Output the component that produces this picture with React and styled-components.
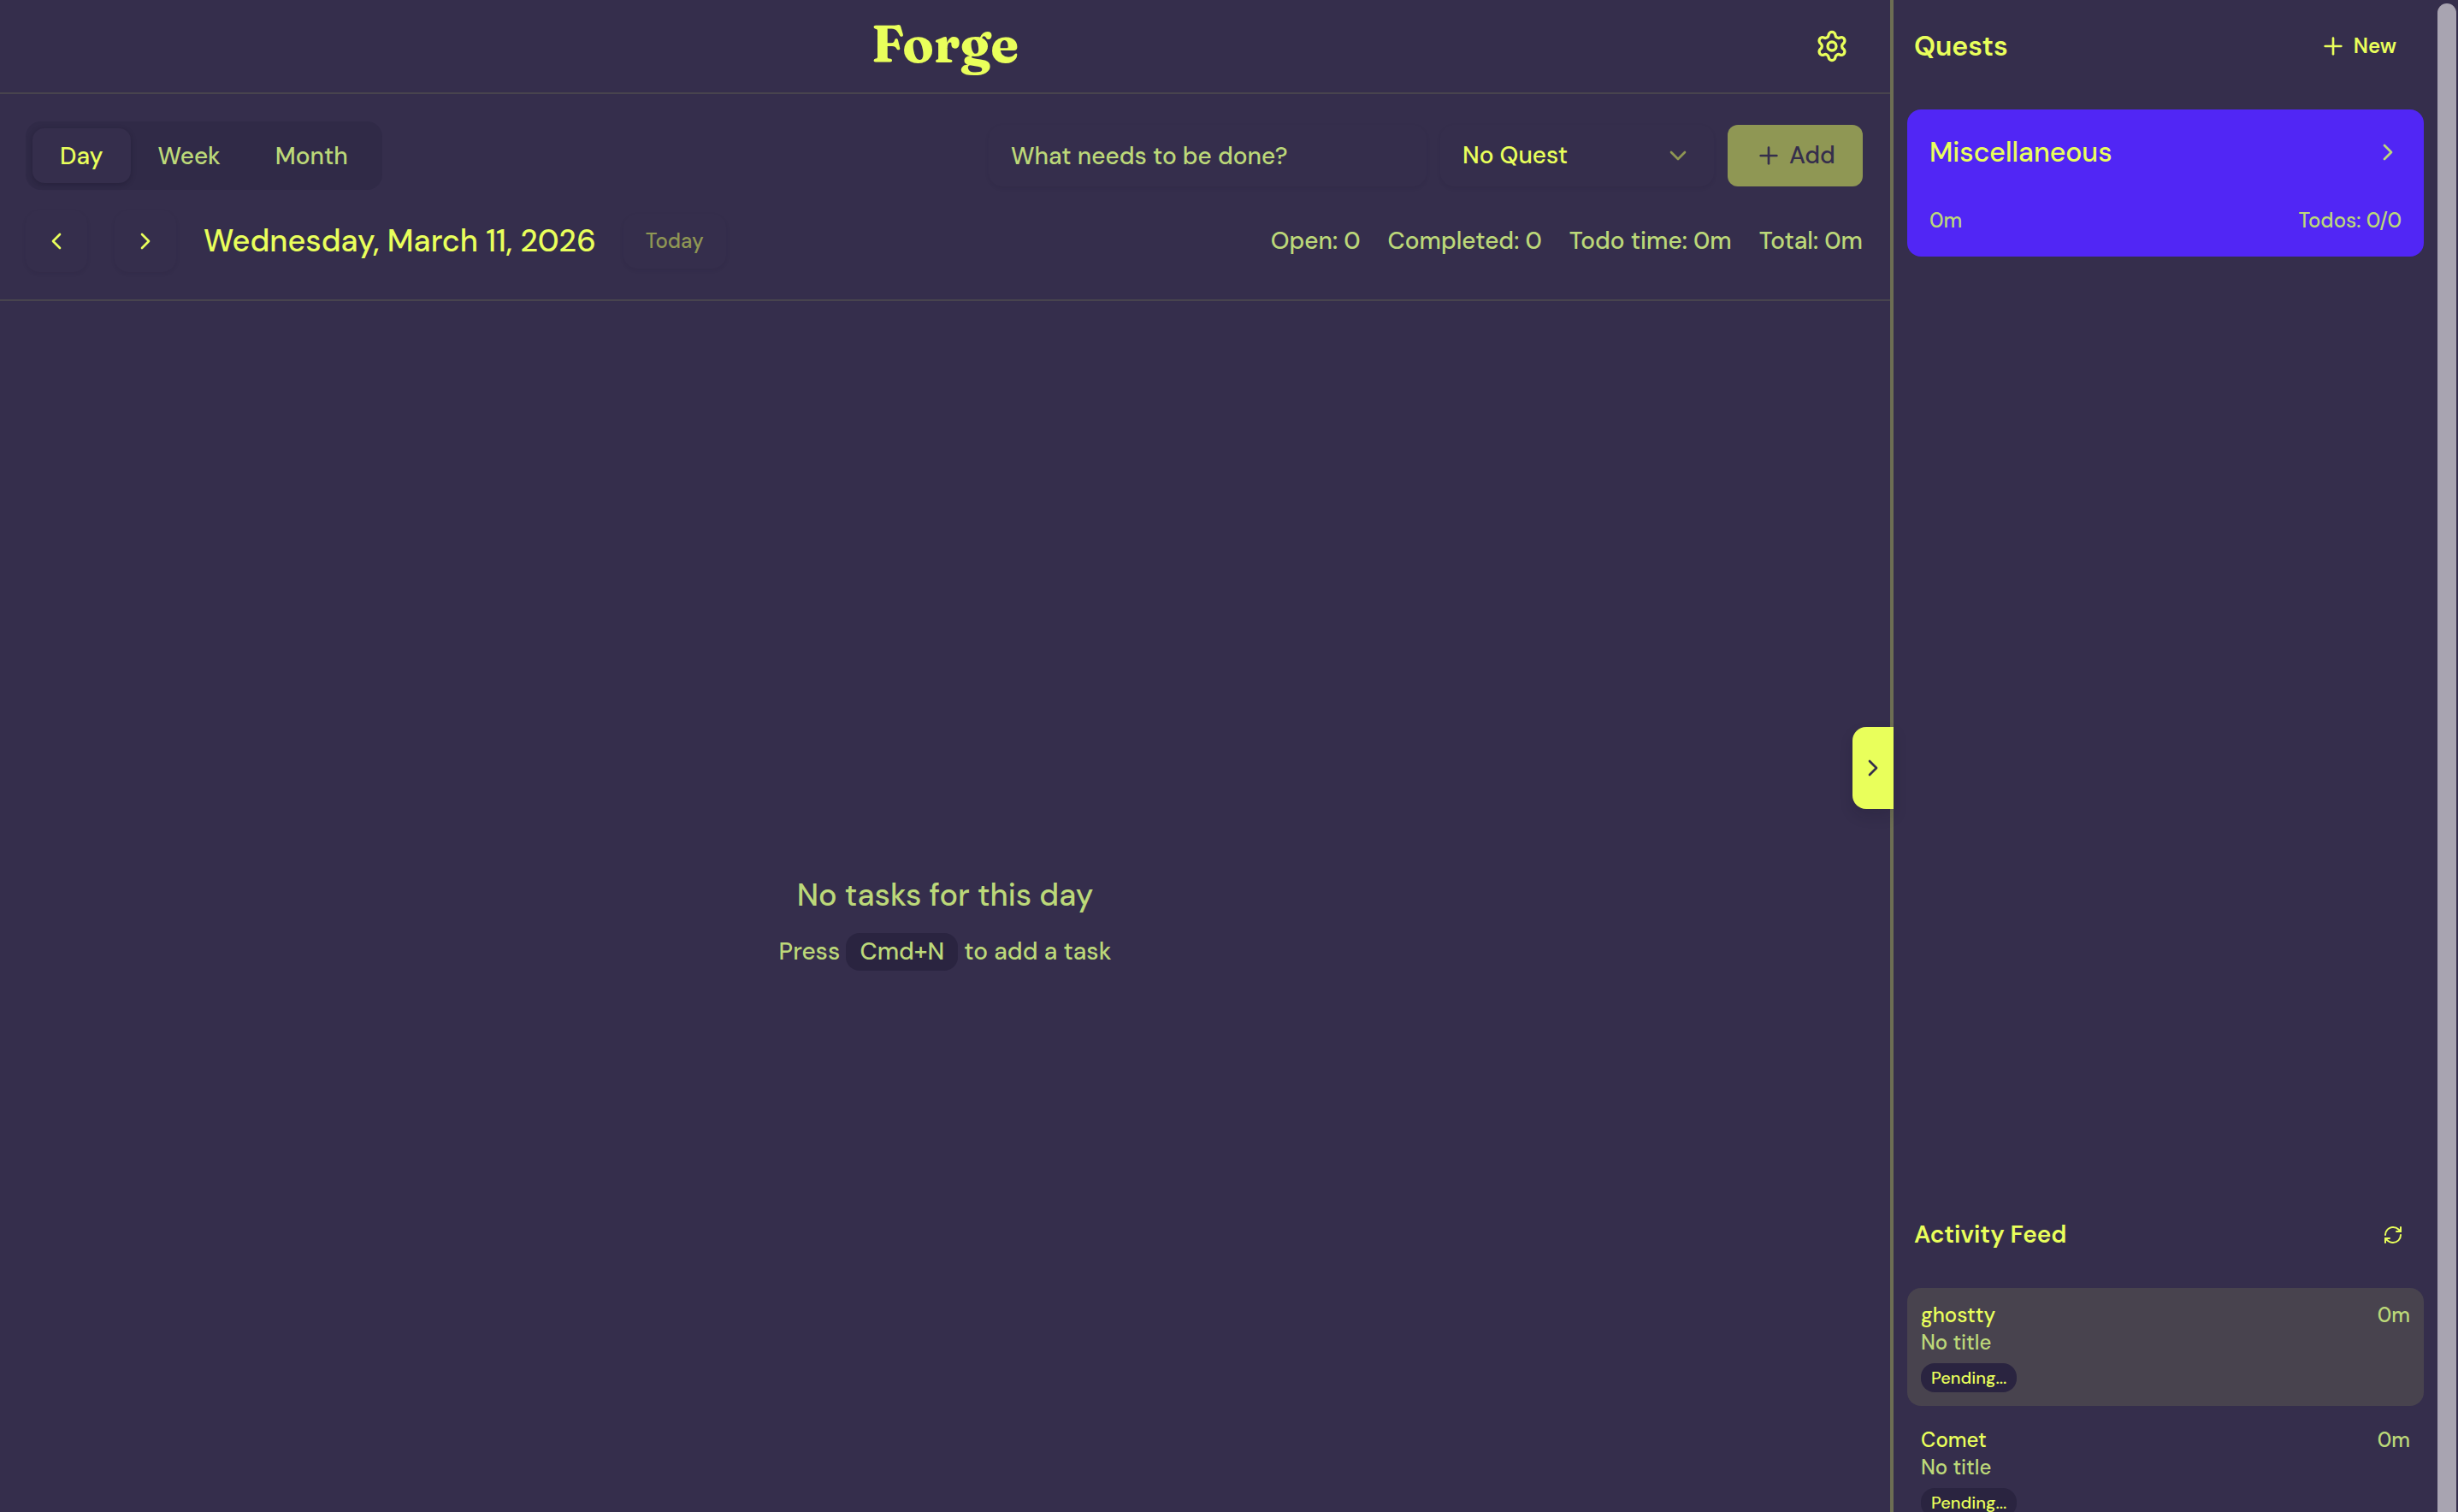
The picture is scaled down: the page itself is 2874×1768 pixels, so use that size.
import React, { useState } from "react";
import styled, { createGlobalStyle, css } from "styled-components";
import {
  ChevronDown,
  ChevronLeft,
  ChevronRight,
  Plus,
  RefreshCw,
  Settings,
} from "lucide-react";

const BG = "#352e4c";
const ACCENT = "#e9ff5b";
const MUTED = "#bcd879";
const LINE = "#48444e";
const SANS = `"DM Sans", Inter, "Liberation Sans", sans-serif`;

const GlobalStyle = createGlobalStyle`
  *, *::before, *::after {
    box-sizing: border-box;
  }
  body {
    margin: 0;
    background: ${BG};
    color: ${ACCENT};
    font-family: ${SANS};
    font-size: 28px;
    line-height: 40px;
  }
  button, input, select {
    font: inherit;
    color: inherit;
    border: 0;
    background: none;
    margin: 0;
    padding: 0;
  }
  h1, h2, h3, p, ul {
    margin: 0;
    padding: 0;
  }
`;

const Layout = styled.div`
  display: flex;
  height: 100vh;
  overflow: hidden;
`;

const Main = styled.main`
  flex: 1;
  min-width: 0;
  display: flex;
  flex-direction: column;
`;

const Header = styled.header`
  display: grid;
  grid-template-columns: 1fr auto 1fr;
  align-items: center;
  height: 110px;
  padding: 0 32px;
  border-bottom: 2px solid ${LINE};
`;

const Logo = styled.h1`
  grid-column: 2;
  padding-bottom: 6px;
  font-family: Fraunces, "DejaVu Serif", serif;
  font-size: 60px;
  font-weight: 700;
  line-height: 72px;
`;

const IconButton = styled.button`
  display: flex;
  align-items: center;
  justify-content: center;
  width: 72px;
  height: 72px;
  border-radius: 16px;
  cursor: pointer;
`;

const SettingsButton = styled(IconButton)`
  justify-self: end;
`;

const Toolbar = styled.section`
  display: flex;
  flex-direction: column;
  gap: 24px;
  padding: 32px 32px 32px 30px;
  border-bottom: 2px solid ${LINE};
`;

const Row = styled.div`
  display: flex;
  align-items: center;
  justify-content: space-between;
`;

const Group = styled.div`
  display: flex;
  align-items: center;
  gap: ${({ $gap }) => $gap || "16px"};
`;

const raised = css`
  border-radius: 16px;
  box-shadow: 0 2px 4px rgba(30, 24, 48, 0.1);
`;

const Tabs = styled.div`
  display: flex;
  height: 80px;
  padding: 8px;
  border-radius: 18px;
  background: #302a47;
`;

const Tab = styled.button`
  padding: 2px 32px 0;
  font-weight: 500;
  cursor: pointer;
  color: ${MUTED};
  ${({ $active }) =>
    $active &&
    css`
      border-radius: 14px;
      color: ${ACCENT};
      background: ${BG};
      box-shadow: 0 2px 6px rgba(20, 16, 36, 0.3);
    `}
`;

const TaskInput = styled.input`
  ${raised}
  width: 512px;
  height: 72px;
  padding: 0 26px;
  font-weight: 500;
  outline: none;
  &::placeholder {
    color: ${MUTED};
    opacity: 1;
  }
`;

const SelectWrap = styled.div`
  ${raised}
  display: grid;
  align-items: center;
  width: 320px;
  height: 72px;
  & > * {
    grid-area: 1 / 1;
  }
  & > svg {
    justify-self: end;
    margin-right: 26px;
    opacity: 0.5;
    pointer-events: none;
  }
`;

const Select = styled.select`
  appearance: none;
  width: 100%;
  height: 72px;
  padding: 0 26px;
  font-weight: 500;
  outline: none;
`;

const AddButton = styled.button`
  display: flex;
  align-items: center;
  justify-content: center;
  gap: 8px;
  width: 158px;
  height: 72px;
  border-radius: 12px;
  font-weight: 500;
  color: ${BG};
  background: #8f9754;
`;

const NavButton = styled(IconButton)`
  ${raised}
`;

const DateTitle = styled.h2`
  font-size: 36px;
  font-weight: 500;
  line-height: 48px;
`;

const TodayButton = styled.button`
  ${raised}
  height: 64px;
  padding: 0 26px;
  font-size: 24px;
  font-weight: 500;
  color: #8f9754;
`;

const Stats = styled.div`
  display: flex;
  gap: 32px;
  font-weight: 500;
  color: ${MUTED};
`;

const Empty = styled.section`
  flex: 1;
  display: flex;
  flex-direction: column;
  align-items: center;
  justify-content: center;
  gap: 20px;
  padding-top: 38px;
  font-weight: 500;
  color: ${MUTED};
`;

const EmptyTitle = styled.p`
  font-size: 36px;
  line-height: 48px;
`;

const Kbd = styled.kbd`
  display: inline-block;
  padding: 2px 16px;
  border-radius: 16px;
  font-family: inherit;
  background: #2a2440;
`;

const Sidebar = styled.aside`
  position: relative;
  display: flex;
  flex-direction: column;
  flex: 0 0 640px;
  border-left: 4px solid #6d6e53;
  padding: 0 16px;
`;

const CollapseButton = styled.button`
  position: absolute;
  top: 850px;
  right: 100%;
  display: flex;
  align-items: center;
  justify-content: center;
  width: 48px;
  height: 96px;
  border-radius: 16px 0 0 16px;
  color: ${BG};
  background: ${ACCENT};
  box-shadow: 0 8px 16px rgba(20, 16, 36, 0.16);
`;

const PanelHeader = styled.div`
  flex: none;
  display: flex;
  align-items: center;
  justify-content: space-between;
  height: 108px;
  padding-left: 8px;
`;

const PanelTitle = styled.h2`
  font-size: ${({ $size }) => $size || "28px"};
  font-weight: 600;
  line-height: 44px;
`;

const NewButton = styled.button`
  display: flex;
  align-items: center;
  gap: 8px;
  padding: 0 32px;
  font-size: 24px;
  font-weight: 600;
`;

const QuestList = styled.section`
  flex: 1;
  padding-top: 20px;
`;

const QuestCard = styled.article`
  display: flex;
  flex-direction: column;
  justify-content: space-between;
  height: 172px;
  padding: 26px;
  border-radius: 16px;
  background: #5126f5;
`;

const QuestName = styled.h3`
  font-size: 32px;
  font-weight: 500;
  line-height: 48px;
`;

const QuestMeta = styled.div`
  display: flex;
  justify-content: space-between;
  font-size: 24px;
  line-height: 32px;
  font-weight: 500;
  color: ${MUTED};
`;

const Feed = styled.section`
  display: flex;
  flex-direction: column;
  gap: 8px;
  height: 378px;
`;

const FeedItem = styled.article`
  flex: none;
  height: 138px;
  padding: 16px;
  border-radius: 16px;
  background: ${({ $active }) => ($active ? "#48434e" : "transparent")};
`;

const FeedLine = styled.div`
  display: flex;
  justify-content: space-between;
  font-size: 24px;
  line-height: 32px;
  font-weight: 500;
  color: ${MUTED};
`;

const AppName = styled.span`
  color: ${ACCENT};
`;

const Badge = styled.span`
  display: block;
  width: fit-content;
  margin-top: 8px;
  padding: 0 12px;
  border-radius: 16px;
  font-size: 20px;
  line-height: 34px;
  font-weight: 500;
  background: #2a2440;
`;

const ScrollTrack = styled.div`
  flex: 0 0 24px;
  padding: 4px 2px 0 0;
`;

const ScrollThumb = styled.div`
  height: 100%;
  border-radius: 12px 12px 0 0;
  background: #a8a4b1;
`;

const views = ["Day", "Week", "Month"];

const stats = ["Open: 0", "Completed: 0", "Todo time: 0m", "Total: 0m"];

const feed = [
  { app: "ghostty", title: "No title", time: "0m", status: "Pending..." },
  { app: "Comet", title: "No title", time: "0m", status: "Pending..." },
];

export default function App() {
  const [view, setView] = useState("Day");
  const [task, setTask] = useState("");

  return (
    <>
      <GlobalStyle />
      <Layout>
        <Main>
          <Header>
            <Logo>Forge</Logo>
            <SettingsButton aria-label="Settings">
              <Settings size={40} />
            </SettingsButton>
          </Header>

          <Toolbar>
            <Row>
              <Tabs>
                {views.map((name) => (
                  <Tab
                    key={name}
                    $active={view === name}
                    onClick={() => setView(name)}
                  >
                    {name}
                  </Tab>
                ))}
              </Tabs>
              <Group>
                <TaskInput
                  aria-label="New task"
                  placeholder="What needs to be done?"
                  value={task}
                  onChange={(e) => setTask(e.target.value)}
                />
                <SelectWrap>
                  <Select aria-label="Quest">
                    <option>No Quest</option>
                  </Select>
                  <ChevronDown size={32} />
                </SelectWrap>
                <AddButton disabled={!task}>
                  <Plus size={32} />
                  Add
                </AddButton>
              </Group>
            </Row>
            <Row>
              <Group $gap="32px">
                <NavButton aria-label="Previous day">
                  <ChevronLeft size={32} />
                </NavButton>
                <NavButton aria-label="Next day">
                  <ChevronRight size={32} />
                </NavButton>
                <DateTitle>Wednesday, March 11, 2026</DateTitle>
                <TodayButton disabled>Today</TodayButton>
              </Group>
              <Stats>
                {stats.map((stat) => (
                  <span key={stat}>{stat}</span>
                ))}
              </Stats>
            </Row>
          </Toolbar>

          <Empty>
            <EmptyTitle>No tasks for this day</EmptyTitle>
            <p>
              Press <Kbd>Cmd+N</Kbd> to add a task
            </p>
          </Empty>
        </Main>

        <Sidebar>
          <CollapseButton aria-label="Collapse sidebar">
            <ChevronRight size={32} />
          </CollapseButton>
          <PanelHeader>
            <PanelTitle $size="32px">Quests</PanelTitle>
            <NewButton>
              <Plus size={32} />
              New
            </NewButton>
          </PanelHeader>
          <QuestList>
            <QuestCard>
              <Row>
                <QuestName>Miscellaneous</QuestName>
                <ChevronRight size={32} color={MUTED} />
              </Row>
              <QuestMeta>
                <span>0m</span>
                <span>Todos: 0/0</span>
              </QuestMeta>
            </QuestCard>
          </QuestList>
          <Feed>
            <PanelHeader>
              <PanelTitle>Activity Feed</PanelTitle>
              <IconButton aria-label="Refresh">
                <RefreshCw size={24} />
              </IconButton>
            </PanelHeader>
            {feed.map((item, i) => (
              <FeedItem key={item.app} $active={i === 0}>
                <FeedLine>
                  <AppName>{item.app}</AppName>
                  <span>{item.time}</span>
                </FeedLine>
                <FeedLine>{item.title}</FeedLine>
                <Badge>{item.status}</Badge>
              </FeedItem>
            ))}
          </Feed>
        </Sidebar>
        <ScrollTrack>
          <ScrollThumb />
        </ScrollTrack>
      </Layout>
    </>
  );
}
